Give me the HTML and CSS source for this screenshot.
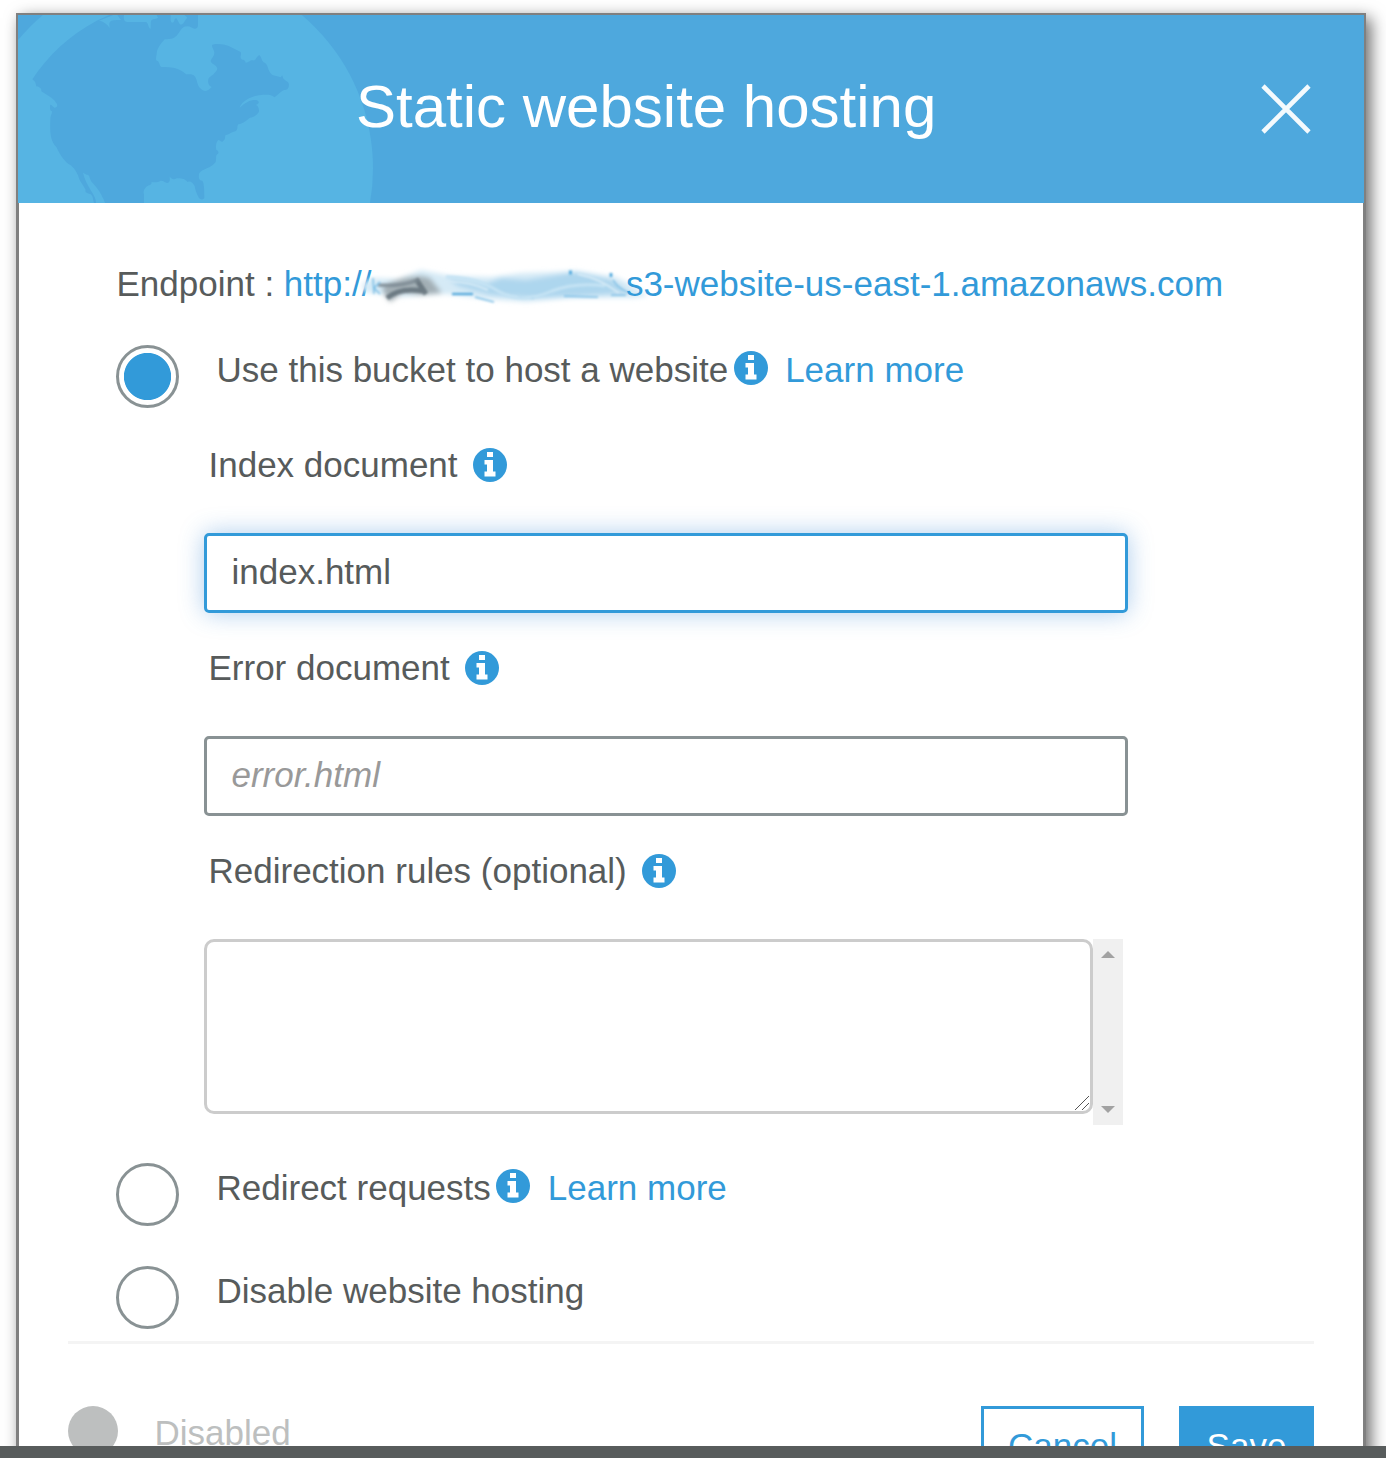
FILE: index.html
```html
<!DOCTYPE html>
<html lang="en">
<head>
<meta charset="utf-8">
<title>Static website hosting</title>
<link rel="stylesheet" href="styles.css">
</head>
<body>
<svg class="defs" width="0" height="0" aria-hidden="true">
  <symbol id="info" viewBox="0 0 34 34">
    <circle cx="17" cy="17" r="17" fill="#329ad9"/>
    <path fill="#fff" d="M14 4h6v5h-6zM11.500 12h8.500v11.500h2.500v5H11.500v-5H14V16.500h-2.500z"/>
  </symbol>
</svg>
<main class="dialog">
  <header class="dialog-header">
    <svg class="globe" viewBox="54 45 1080 564" width="360" height="188" aria-hidden="true">
      <circle cx="517" cy="505" r="602" fill="#56b4e3"/>
      <path fill="#4ea8dd" d="M97 238C145 165 205 108 290 62L328 45H340L297 62C310 64 322 72 329 84C328 74 326 66 334 62C343 59 353 60 363 60L352 45H372C370 55 372 65 381 66H438C446 69 443 80 451 87C454 78 450 65 455 60C461 55 470 58 474 53L470 45H512C512 54 510 66 517 68C525 68 521 55 529 55C534 61 537 73 543 74C552 72 553 61 562 53C560 50 556 48 553 45H594V75C594 84 589 87 583 86C575 85 572 79 562 79C540 79 542 100 524 112C515 119 503 117 494 118C485 129 470 145 470 162C468 172 467 180 470 182C479 183 477 195 484 201C505 200 528 202 544 212C555 218 556 224 566 223C595 221 586 249 600 264C613 278 622 274 635 261C625 258 623 246 625 238C627 230 637 228 643 220C648 214 655 209 650 201C645 192 632 191 632 182C635 174 643 168 643 158C643 149 635 143 636 135C646 129 673 132 686 138L722 156C726 162 718 171 724 177C729 181 735 178 737 188C747 188 748 181 758 181C768 184 767 171 778 165C785 172 784 180 790 186C807 192 801 212 816 224C824 229 832 226 842 232L847 226C849 235 850 238 862 245C871 250 866 269 858 269C845 269 836 283 823 292C812 281 788 285 770 287C750 292 726 303 719 323C737 307 752 299 767 300C780 302 779 312 767 315C775 315 779 331 776 337C767 350 758 352 750 353C742 359 730 370 715 373C710 378 715 386 708 393C698 394 690 402 676 406C674 414 678 418 667 425C663 426 659 420 655 420C649 426 646 437 649 450C654 451 659 459 652 463C646 467 650 475 647 486C635 505 605 506 597 521C596 531 595 541 606 542C613 543 613 580 613 594C608 602 600 597 597 594C588 578 585 566 584 558C575 544 570 543 563 546C552 534 543 536 530 535C521 541 512 536 509 529C509 538 512 545 502 549C493 548 491 541 482 542C473 548 463 547 454 546C458 554 447 555 441 559C434 566 428 573 432 583V609H315C306 583 292 564 278 549C267 538 271 523 260 524L249 518C252 535 263 554 273 572C282 585 288 596 288 609H282C278 594 279 585 270 582C261 579 253 575 257 570C250 555 239 546 234 526C229 516 222 501 207 493C192 483 177 459 169 441C146 419 151 379 151 357C151 347 157 341 156 334C149 333 149 319 151 314C156 314 158 320 163 323C172 323 175 315 168 308C157 291 139 285 124 274C125 265 120 264 113 259C107 263 109 250 105 245C101 241 99 240 97 238Z"/>
    </svg>
    <h1 class="title">Static website hosting</h1>
    <svg class="close" viewBox="0 0 50 50" width="50" height="50" role="img" aria-label="Close">
      <path d="M2 2L48 48M48 2L2 48" stroke="#fff" stroke-opacity=".94" stroke-width="4.600" fill="none"/>
    </svg>
  </header>

  <section class="content">
    <p class="endpoint">Endpoint : <a class="link">http://<svg class="smudge" viewBox="0 0 254.500 50" width="254.500" height="50" aria-hidden="true">
      <defs>
        <filter id="soft" x="-20%" y="-50%" width="140%" height="200%"><feGaussianBlur stdDeviation="2.400"/></filter>
        <filter id="fine" x="-20%" y="-50%" width="140%" height="200%"><feGaussianBlur stdDeviation="1.100"/></filter>
      </defs>
      <g transform="translate(5 -12)">
        <g filter="url(#soft)">
          <path fill="#d5eaf6" d="M-14 24L-4 18L22 19L45 10L75 16L115 17L145 13L200 11L240 17L254 24L272 36L258 38L195 38L150 42L110 39L70 34L25 37L-12 32Z"/>
          <path fill="#add6ee" d="M70 17L110 24L125 18L150 20L200 12L236 20L252 33L205 36L160 38L115 35L82 26Z"/>
          <path fill="#a3afb5" d="M6 26Q28 15 46 16L54 18L66 33L45 35L27 33L14 42L8 34Z"/>
        </g>
        <g filter="url(#fine)" fill="none">
          <path stroke="#5f6d75" stroke-width="5" stroke-opacity=".8" d="M11 38Q24 27 47 31M40 19L50 34"/>
          <path stroke="#7c8a92" stroke-width="3.500" stroke-opacity=".8" d="M2 25Q24 27 42 20"/>
          <path stroke="#4da5d9" stroke-width="2.200" d="M76 34H97"/>
          <path stroke="#7abde5" stroke-width="1.500" d="M-3 18L-2 34M4 22L-2 28L4 34M99 37L118 42M142 37L158 38M188 36L222 37M235 35H250M237 20Q242 29 254 33"/>
          <path stroke="#c5e3f4" stroke-width="3" d="M70 17Q100 17 122 31T176 31Q200 22 229 26"/>
          <path stroke="#d6ebf7" stroke-width="2" d="M66 22Q91 20 112 30M202 14Q223 18 243 33"/>
          <path stroke="#3d9fda" stroke-width="2.500" d="M194.500 10.500V14.500M235 13V17"/>
        </g>
      </g>
    </svg>s3-website-us-east-1.amazonaws.com</a></p>

    <div class="option option-host">
      <span class="radio radio-on"></span>
      <span class="option-text">Use this bucket to host a website</span>
      <svg class="info"><use href="#info"/></svg>
      <a class="link learn">Learn more</a>
    </div>

    <div class="fields">
      <div class="field">
        <label class="field-label">Index document <svg class="info"><use href="#info"/></svg></label>
        <div class="input input-focus">index.html</div>
      </div>
      <div class="field">
        <label class="field-label">Error document <svg class="info"><use href="#info"/></svg></label>
        <div class="input placeholder">error.html</div>
      </div>
      <div class="field">
        <label class="field-label">Redirection rules (optional) <svg class="info"><use href="#info"/></svg></label>
        <div class="rules">
          <div class="textarea">
            <svg width="16" height="16" viewBox="0 0 16 16" aria-hidden="true"><path d="M1 15L15 1M8 15L15 8" stroke="#555" stroke-width="1" fill="none"/></svg>
          </div>
          <div class="scrollbar">
            <svg width="14" height="7" viewBox="0 0 14 7"><path d="M0 7L7 0L14 7Z" fill="#a2a2a2"/></svg>
            <svg width="14" height="7" viewBox="0 0 14 7"><path d="M0 0H14L7 7Z" fill="#a2a2a2"/></svg>
          </div>
        </div>
      </div>
    </div>

    <div class="option option-redirect">
      <span class="radio"></span>
      <span class="option-text">Redirect requests</span>
      <svg class="info"><use href="#info"/></svg>
      <a class="link learn">Learn more</a>
    </div>
    <div class="option option-disable">
      <span class="radio"></span>
      <span class="option-text">Disable website hosting</span>
    </div>
  </section>

  <footer class="footer">
    <span class="status-dot"></span>
    <span class="status">Disabled</span>
    <button class="button cancel">Cancel</button>
    <button class="button save">Save</button>
  </footer>
</main>
<div class="bottom-bar"></div>
</body>
</html>
```
FILE: styles.css
```css
* { box-sizing: border-box; }
html { overflow: hidden; }
body {
  display: flex;
  flex-direction: column;
  height: 1458px;
  margin: 0;
  padding-top: 13px;
  overflow: hidden;
  background: #fff;
  color: #575b5b;
  font: 35px/40px "Liberation Sans", Arial, sans-serif;
}
.defs { position: absolute; }
.dialog {
  flex: none;
  width: 1350px;
  height: 1520px;
  margin: 0 0 -87px 16px;
  border: solid #808080;
  border-width: 2px 3px;
  background: #fff;
  box-shadow: 5px 5px 15px rgba(0, 0, 0, .58);
}
.dialog-header {
  position: relative;
  display: flex;
  justify-content: space-between;
  height: 188px;
  margin: 0 -1px;
  padding: 58px 53px 0 338px;
  background: #4ea8dd;
}
.globe { position: absolute; top: 0; left: 0; }
.title {
  position: relative;
  margin: 0;
  color: #fff;
  font-size: 60px;
  font-weight: 400;
  line-height: 68px;
  white-space: nowrap;
}
.close { margin-top: 11px; }
.content { height: 1138px; padding: 61px 0 0 95px; }
.endpoint { height: 40px; margin: 0; padding-left: 2.5px; white-space: nowrap; }
.link { color: #329ad9; }
.smudge { display: inline-block; height: 50px; margin: -10px 0; vertical-align: -16px; overflow: visible; }
.option { display: flex; align-items: flex-start; height: 63px; padding-left: 2px; white-space: nowrap; }
.option-host { margin-top: 41px; }
.option-redirect { margin-top: 38px; }
.option-disable { margin-top: 40px; }
.radio {
  flex: none;
  width: 63px;
  height: 63px;
  margin-right: 37.5px;
  border: 3px solid #899294;
  border-radius: 50%;
}
.radio-on { background: radial-gradient(circle, #329ad9 23.200px, #fff 24px); }
.option-text { margin-top: 5px; }
.info { flex: none; width: 34px; height: 34px; }
.option .info { margin: 5.5px 0 0 5.5px; }
.learn { margin: 5px 0 0 17.5px; }
.fields { width: 924px; margin: 37px 0 0 90px; }
.field + .field { margin-top: 35px; }
.field-label { display: flex; align-items: center; gap: 15px; height: 40px; margin: 0 0 48px 4.5px; }
.input {
  height: 80px;
  padding: 16px 24.5px;
  border: 3px solid #899294;
  border-radius: 5px;
}
.input-focus { border-color: #329ad9; box-shadow: 0 0 25px rgba(50, 130, 210, .4); }
.placeholder { color: #999; font-style: italic; }
.rules { display: flex; align-items: flex-start; height: 186px; }
.textarea {
  display: flex;
  align-items: flex-end;
  justify-content: flex-end;
  width: 889px;
  height: 175px;
  border: 3px solid #ccc;
  border-radius: 10px;
}
.scrollbar {
  display: flex;
  flex-direction: column;
  align-items: center;
  justify-content: space-between;
  width: 30px;
  height: 186px;
  padding: 12px 0;
  background: #f0f0f0;
}
.footer {
  display: flex;
  align-items: flex-start;
  margin: 0 49px;
  padding-top: 62px;
  border-top: 3px solid #f4f4f4;
}
.status-dot { width: 50px; height: 50px; border-radius: 50%; background: #bdbfbf; }
.status { margin: 7px auto 0 36.5px; color: #bdbfbf; }
.button { height: 80px; padding: 17px 0; border: 3px solid #329ad9; font: inherit; }
.cancel { width: 163px; margin-right: 35px; background: #fff; color: #329ad9; }
.save { width: 135px; background: #329ad9; color: #fff; }
.bottom-bar { position: relative; flex: none; height: 12px; background: #585c5c; }
```
